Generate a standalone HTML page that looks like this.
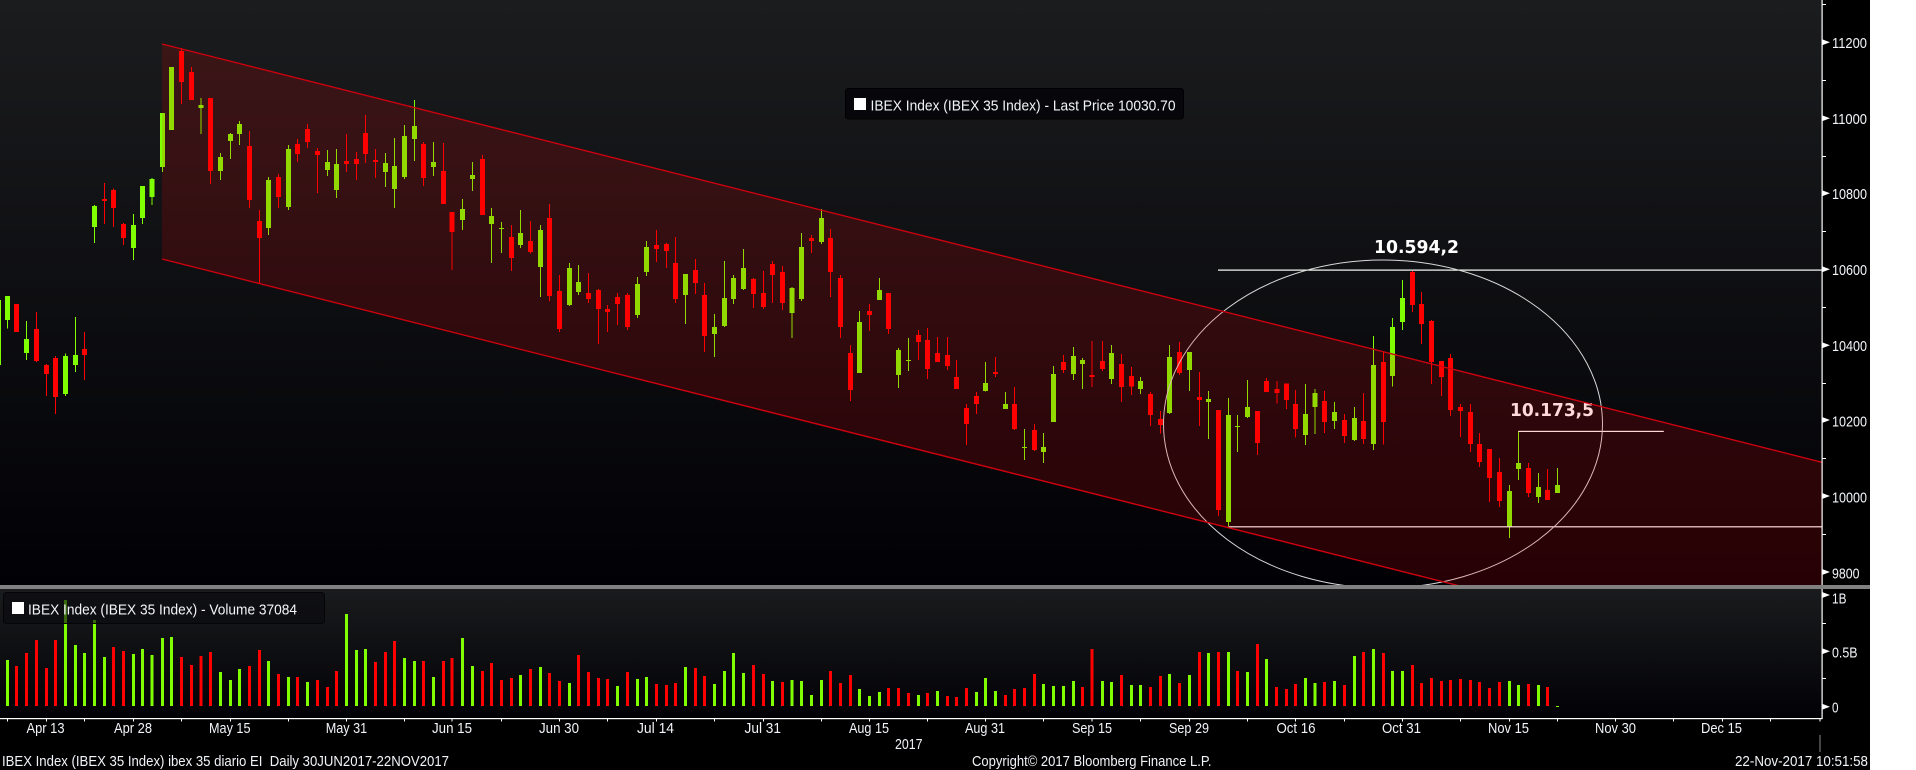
<!DOCTYPE html>
<html><head><meta charset="utf-8"><title>IBEX Index</title>
<style>html,body{margin:0;padding:0;background:#fff;width:1916px;height:770px;overflow:hidden}svg{display:block}text{font-family:"Liberation Sans",sans-serif;fill:#f1f4f8;font-size:15px}.b{font-family:"DejaVu Sans",sans-serif;font-weight:bold;font-size:18px;fill:#fff}</style></head>
<body>
<svg width="1916" height="770" viewBox="0 0 1916 770" xmlns="http://www.w3.org/2000/svg">
<defs>
<linearGradient id="bg" x1="0" y1="0" x2="0" y2="1"><stop offset="0" stop-color="#1b1c1e"/><stop offset="1" stop-color="#010105"/></linearGradient>
<linearGradient id="bv" x1="0" y1="0" x2="0" y2="1"><stop offset="0" stop-color="#1a1b1d"/><stop offset="1" stop-color="#020206"/></linearGradient>
<clipPath id="cp"><rect x="0" y="0" width="1822" height="585"/></clipPath>
</defs>
<rect x="0" y="0" width="1870" height="770" fill="#000"/>
<rect x="0" y="0" width="1822" height="585" fill="url(#bg)"/>
<rect x="0" y="589" width="1822" height="129" fill="url(#bv)"/>

<g clip-path="url(#cp)">
<g shape-rendering="crispEdges" fill="none">
<g transform="scale(0.40816 0.33333)">
<path stroke="#7fff00" stroke-width="2.45" d="M18 888V985M65 963V1080M160 1060V1188M185 951V1116M231 615V729M327 642V780M349 558V672M373 534V615M398 339V516M420 201V390M493 294V402M540 459V540M565 399V477M587 363V435M658 531V705M707 435V630M802 450V528M825 447V594M944 459V561M967 414V624M991 375V537M1015 300V483M1062 426V528M1133 597V690M1158 486V573M1204 624V789M1229 666V759M1275 630V744M1324 675V891M1395 789V918M1417 795V885M1562 831V954"/>
<path stroke="#7fff00" stroke-width="12.25" d="M-4 900V1095M18 888V960M65 1017V1059M160 1068V1182M185 1065V1095M231 618V681M327 675V744M349 558V654M373 537V591M398 339V501M420 201V390M493 315V324M540 471V513M565 402V423M587 372V402M658 540V684M707 447V621M802 486V510M825 492V570M944 489V516M967 498V567M991 408V531M1015 378V417M1062 486V501M1133 627V660M1158 525V537M1204 648V672M1229 684V687M1275 699V735M1324 690V801M1395 804V915M1417 846V876M1562 852V945"/>
<path stroke="#ff0000" stroke-width="2.45" d="M89 936V1086M114 1092V1188M136 1068V1242M207 996V1140M256 549V672M278 565V681M302 669V735M445 144V312M469 201V300M516 294V552M611 393V624M636 630V850M682 522V624M729 417V486M753 372V444M778 444V579M849 402V516M873 456V540M896 345V489M920 447V534M1038 426V558M1087 429V612M1108 636V810M1182 465V645M1253 675V813M1300 663V760M1346 612V903M1371 825V996M1442 819V909M1466 867V1032M1488 915V996M1513 879V975M1537 879V990"/>
<path stroke="#ff0000" stroke-width="12.25" d="M41 912V996M89 987V1083M114 1095V1122M136 1074V1191M207 1047V1065M256 597V603M278 570V624M302 672V714M445 153V246M469 216V300M516 294V513M611 438V600M636 663V714M682 531V591M729 432V462M753 387V426M778 453V465M849 483V492M873 477V492M896 399V462M920 480V486M1038 432V534M1087 513V612M1108 636V696M1182 477V645M1253 711V774M1300 723V756M1346 654V888M1371 873V987M1442 879V897M1466 870V927M1488 927V936M1513 891V912M1537 885V981"/>
</g>
<g transform="translate(640 0) scale(0.40816 0.33333)">
<path stroke="#7fff00" stroke-width="2.45" d="M16 723V828M111 822V972M182 942V1071M207 783V981M229 825V912M253 747V870M373 861V1014M396 699V903M445 627V732M538 933V1119M587 834V900M633 1044V1164M658 1014V1113M846 1086V1175M895 1176V1227M942 1287V1380M988 1299V1389M1013 1098V1266M1062 1041V1140M1084 1074V1167M1155 1035V1152M1226 1131V1182M1297 1035V1242M1346 1056V1173M1393 1173V1317M1442 1194V1580M1464 1245V1356M1488 1140V1254"/>
<path stroke="#7fff00" stroke-width="12.25" d="M16 741V816M111 822V885M182 981V1002M207 894V978M229 834V897M253 804V867M373 864V939M396 741V897M445 654V726M538 966V1119M587 870V900M633 1050V1125M658 1080V1083M846 1149V1173M895 1212V1227M942 1341V1344M988 1341V1356M1013 1122V1266M1062 1068V1122M1084 1080V1092M1155 1059V1137M1226 1143V1167M1297 1071V1239M1346 1056V1110M1393 1197V1206M1442 1245V1566M1464 1278V1281M1488 1221V1251"/>
<path stroke="#ff0000" stroke-width="2.45" d="M40 690V786M65 729V804M87 711V909M136 777V882M158 849V1056M278 834V924M302 813V927M325 783V909M349 798V930M420 705V759M467 687V891M491 825V1014M516 1035V1203M562 912V993M609 879V1002M682 990V1080M704 984V1137M729 1011V1086M753 1011V1110M775 1080V1167M800 1212V1335M825 1176V1242M871 1071V1131M918 1161V1290M966 1272V1353M1037 1065V1119M1108 1023V1161M1133 1023V1113M1180 1062V1206M1204 1101V1185M1251 1176V1278M1275 1233V1300M1322 1026V1125M1371 1116V1278M1417 1230V1548M1513 1233V1365M1535 1134V1176"/>
<path stroke="#ff0000" stroke-width="12.25" d="M40 735V747M65 732V753M87 789V897M136 810V849M158 885V1008M278 837V882M302 879V921M325 792V825M349 816V909M420 714V723M467 714V816M491 834V981M516 1059V1170M562 933V945M609 879V987M682 1005V1026M704 1020V1107M729 1059V1086M753 1065V1098M775 1131V1167M800 1224V1272M825 1188V1212M871 1116V1122M918 1212V1287M966 1290V1350M1037 1086V1110M1108 1125V1131M1133 1083V1107M1180 1092V1161M1204 1128V1160M1251 1182V1245M1275 1257V1275M1322 1056V1119M1371 1191V1200M1417 1230V1530M1513 1233V1329M1535 1143V1176"/>
</g>
<g transform="translate(1276 0) scale(0.40816 0.33333)">
<path stroke="#7fff00" stroke-width="2.45" d="M72 1152V1335M96 1167V1302M143 1206V1287M192 1221V1323M239 1008V1350M285 954V1160M310 840V990M572 1455V1614M594 1293V1440M643 1419V1509M690 1404V1479"/>
<path stroke="#7fff00" stroke-width="12.25" d="M72 1242V1305M96 1179V1221M143 1236V1263M192 1254V1320M239 1095V1332M285 981V1128M310 894V966M572 1473V1579M594 1389V1407M643 1461V1491M690 1455V1479"/>
<path stroke="#ff0000" stroke-width="2.45" d="M2 1143V1210M26 1150V1227M48 1170V1313M119 1173V1299M168 1242V1329M214 1179V1332M263 1056V1333M334 813V936M356 876V1032M381 960V1152M405 1083V1188M427 1062V1248M452 1212V1311M476 1212V1356M498 1299V1401M523 1347V1506M547 1374V1521M619 1389V1491M665 1407V1500"/>
<path stroke="#ff0000" stroke-width="12.25" d="M2 1167V1179M26 1150V1200M48 1212V1287M119 1203V1266M168 1260V1308M214 1263V1317M263 1086V1266M334 816V915M356 912V972M381 963V1086M405 1083V1131M427 1074V1230M452 1221V1233M476 1236V1332M498 1332V1386M523 1347V1434M547 1416V1503M619 1404V1479M665 1470V1500"/>
</g>
</g>
<rect x="1218" y="269.5" width="604" height="1.2" fill="#fff"/>
<rect x="1228.6" y="526.2" width="594" height="1.2" fill="#fff"/>
<rect x="1518.4" y="430.8" width="145.4" height="1.2" fill="#fff"/>
<ellipse cx="1383" cy="424" rx="219.5" ry="164" fill="none" stroke="#d8d8d8" stroke-width="1"/>
<text class="b" x="1510" y="416" textLength="84" lengthAdjust="spacingAndGlyphs">10.173,5</text>
<polygon points="162,44 1822,462.3 1822,586 1464,586 162,259" fill="#ff0000" fill-opacity="0.15"/>
<path d="M162 44L1822 462.3M162 259L1464 587" fill="none" stroke="#d0000e" stroke-width="1.4"/>
</g>

<text class="b" x="1374" y="253" textLength="85" lengthAdjust="spacingAndGlyphs">10.594,2</text>

<rect x="845.5" y="88.5" width="338" height="30.5" rx="3" fill="#07070b" stroke="#000"/>
<rect x="854" y="98" width="12" height="12" fill="#fff"/>
<text x="870.5" y="110.5" textLength="305" lengthAdjust="spacingAndGlyphs">IBEX Index (IBEX 35 Index) - Last Price 10030.70</text>

<rect x="0" y="585" width="1870" height="4" fill="#808080"/>

<g fill="none" shape-rendering="crispEdges">
<g transform="translate(0 385) scale(0.40816 0.33333)">
<path stroke="#7fff00" stroke-width="7.35" d="M18 825V963M160 645V963M185 780V963M207 804V963M231 705V963M256 816V963M327 807V963M349 792V963M373 810V963M398 759V963M420 756V963M540 861V963M565 885V963M587 852V963M658 828V963M707 876V963M753 891V963M849 687V963M873 795V963M896 792V963M991 819V963M1015 828V963M1062 876V963M1133 759V963M1158 843V963M1275 870V963M1324 846V963M1395 894V963M1513 903V963M1562 882V963"/>
<path stroke="#ff0000" stroke-width="7.35" d="M41 843V963M65 804V963M89 765V963M114 849V963M136 765V963M278 786V963M302 798V963M445 816V963M469 840V963M493 813V963M516 801V963M611 843V963M636 795V963M682 867V963M729 876V963M778 885V963M802 906V963M825 858V963M920 831V963M944 801V963M967 768V963M1038 828V963M1087 828V963M1108 819V963M1182 858V963M1204 834V963M1229 885V963M1253 879V963M1300 852V963M1346 864V963M1371 888V963M1417 810V963M1442 861V963M1466 879V963M1488 882V963M1537 861V963"/>
<path stroke="#fff" stroke-width="2.45" d="M18 1000V1010M114 1000V1010M207 1000V1010M327 1000V1010M445 1000V1010M565 1000V1010M707 1000V1010M849 1000V1010M991 1000V1010M1108 1000V1010M1229 1000V1010M1371 1000V1010M1488 1000V1010"/>
</g>
<g transform="translate(640 385) scale(0.40816 0.33333)">
<path stroke="#7fff00" stroke-width="7.35" d="M16 876V963M111 846V963M182 897V963M207 858V963M229 804V963M253 864V963M325 888V963M373 885V963M396 888V963M420 930V963M445 885V963M538 912V963M562 933V963M587 921V963M682 930V963M729 918V963M825 921V963M846 879V963M871 918V963M988 897V963M1013 903V963M1037 903V963M1062 888V963M1133 888V963M1155 891V963M1204 900V963M1226 900V963M1297 867V963M1346 870V963M1393 804V963M1442 801V963M1488 861V963M1535 822V963"/>
<path stroke="#ff0000" stroke-width="7.35" d="M40 897V963M65 900V963M87 894V963M136 849V963M158 873V963M278 840V963M302 867V963M349 891V963M467 858V963M491 894V963M516 870V963M609 909V963M633 909V963M658 924V963M704 924V963M753 933V963M775 936V963M800 909V963M895 930V963M918 912V963M942 909V963M966 867V963M1084 906V963M1108 792V963M1180 870V963M1251 906V963M1275 873V963M1322 894V963M1371 801V963M1417 801V963M1464 858V963M1513 777V963M1560 906V963"/>
<path stroke="#fff" stroke-width="2.45" d="M40 1000V1010M182 1000V1010M302 1000V1010M445 1000V1010M562 1000V1010M704 1000V1010M846 1000V1010M988 1000V1010M1108 1000V1010M1226 1000V1010M1346 1000V1010M1488 1000V1010"/>
</g>
<g transform="translate(1276 385) scale(0.40816 0.33333)">
<path stroke="#7fff00" stroke-width="7.35" d="M72 879V963M96 894V963M143 888V963M192 813V963M239 792V963M285 858V963M310 858V963M572 888V963M594 900V963M643 900V963M690 963V966"/>
<path stroke="#ff0000" stroke-width="7.35" d="M26 912V963M48 897V963M119 891V963M168 900V963M214 801V963M263 804V963M334 840V963M356 894V963M381 879V963M405 888V963M427 885V963M452 882V963M476 885V963M498 891V963M523 909V963M547 891V963M619 897V963M665 906V963"/>
<path stroke="#fff" stroke-width="2.45" d="M48 1000V1010M168 1000V1010M310 1000V1010M452 1000V1010M572 1000V1010M690 1000V1010M832 1000V1010M974 1000V1010M1094 1000V1010M1212 1000V1010M1333 1000V1010"/>
</g>
</g>

<rect x="3.5" y="592.5" width="321" height="31" rx="3" fill="#0a0a0e" fill-opacity="0.62" stroke="#050507"/>
<rect x="12" y="602" width="12" height="12" fill="#fff"/>
<text x="28" y="614.5" textLength="269" lengthAdjust="spacingAndGlyphs">IBEX Index (IBEX 35 Index) - Volume 37084</text>

<!-- axes -->
<rect x="0" y="718" width="1822.5" height="1.2" fill="#fff"/>
<rect x="1821.5" y="0" width="1.2" height="585" fill="#fff"/>
<rect x="1821.5" y="589" width="1.2" height="130" fill="#fff"/>
<rect x="1819.5" y="735" width="1" height="17" fill="#8a8a8a"/>
<g fill="#fff">
<path d="M1822 39.3L1830 42.3L1822 45.3ZM1822 115.3L1830 118.3L1822 121.3ZM1822 190.3L1830 193.3L1822 196.3ZM1822 266.3L1830 269.3L1822 272.3ZM1822 342.3L1830 345.3L1822 348.3ZM1822 417L1830 420L1822 423ZM1822 493L1830 496L1822 499ZM1822 569L1830 572L1822 575ZM1822 592L1830 595L1822 598ZM1822 648.3L1830 651.3L1822 654.3ZM1822 703.7L1830 706.7L1822 709.7Z"/>
<path shape-rendering="crispEdges" d="M1822 4h4v1h-4zM1822 80h4v1h-4zM1822 156h4v1h-4zM1822 231h4v1h-4zM1822 307h4v1h-4zM1822 383h4v1h-4zM1822 458h4v1h-4zM1822 534h4v1h-4zM1822 623h4v1h-4zM1822 678h4v1h-4z"/>
</g>
<text x="1832" y="48" textLength="35" lengthAdjust="spacingAndGlyphs">11200</text>
<text x="1832" y="124" textLength="35" lengthAdjust="spacingAndGlyphs">11000</text>
<text x="1832" y="199" textLength="35" lengthAdjust="spacingAndGlyphs">10800</text>
<text x="1832" y="275" textLength="35" lengthAdjust="spacingAndGlyphs">10600</text>
<text x="1832" y="351" textLength="35" lengthAdjust="spacingAndGlyphs">10400</text>
<text x="1832" y="426.5" textLength="35" lengthAdjust="spacingAndGlyphs">10200</text>
<text x="1832" y="502.5" textLength="35" lengthAdjust="spacingAndGlyphs">10000</text>
<text x="1832" y="578.5" textLength="27.5" lengthAdjust="spacingAndGlyphs">9800</text>
<text x="1832" y="603.5" textLength="14.5" lengthAdjust="spacingAndGlyphs">1B</text>
<text x="1832" y="657.5" textLength="25.5" lengthAdjust="spacingAndGlyphs">0.5B</text>
<text x="1832" y="712.5" textLength="6.5" lengthAdjust="spacingAndGlyphs">0</text>

<text x="26.5" y="733" textLength="38" lengthAdjust="spacingAndGlyphs">Apr 13</text>
<text x="114" y="733" textLength="38" lengthAdjust="spacingAndGlyphs">Apr 28</text>
<text x="209" y="733" textLength="41.5" lengthAdjust="spacingAndGlyphs">May 15</text>
<text x="325.7" y="733" textLength="41.5" lengthAdjust="spacingAndGlyphs">May 31</text>
<text x="432" y="733" textLength="40" lengthAdjust="spacingAndGlyphs">Jun 15</text>
<text x="539" y="733" textLength="40" lengthAdjust="spacingAndGlyphs">Jun 30</text>
<text x="637" y="733" textLength="37" lengthAdjust="spacingAndGlyphs">Jul 14</text>
<text x="744.5" y="733" textLength="36.5" lengthAdjust="spacingAndGlyphs">Jul 31</text>
<text x="849" y="733" textLength="40" lengthAdjust="spacingAndGlyphs">Aug 15</text>
<text x="965" y="733" textLength="40" lengthAdjust="spacingAndGlyphs">Aug 31</text>
<text x="1072" y="733" textLength="40" lengthAdjust="spacingAndGlyphs">Sep 15</text>
<text x="1169" y="733" textLength="40" lengthAdjust="spacingAndGlyphs">Sep 29</text>
<text x="1276.5" y="733" textLength="39" lengthAdjust="spacingAndGlyphs">Oct 16</text>
<text x="1382" y="733" textLength="39" lengthAdjust="spacingAndGlyphs">Oct 31</text>
<text x="1488" y="733" textLength="41" lengthAdjust="spacingAndGlyphs">Nov 15</text>
<text x="1595" y="733" textLength="41" lengthAdjust="spacingAndGlyphs">Nov 30</text>
<text x="1701" y="733" textLength="41" lengthAdjust="spacingAndGlyphs">Dec 15</text>
<text x="895" y="749" textLength="27.5" lengthAdjust="spacingAndGlyphs">2017</text>
<text x="2" y="766" textLength="447" lengthAdjust="spacingAndGlyphs" xml:space="preserve">IBEX Index (IBEX 35 Index) ibex 35 diario EI  Daily 30JUN2017-22NOV2017</text>
<text x="972" y="766" textLength="239.5" lengthAdjust="spacingAndGlyphs">Copyright© 2017 Bloomberg Finance L.P.</text>
<text x="1735" y="766" textLength="133" lengthAdjust="spacingAndGlyphs">22-Nov-2017 10:51:58</text>
</svg>
</body></html>
